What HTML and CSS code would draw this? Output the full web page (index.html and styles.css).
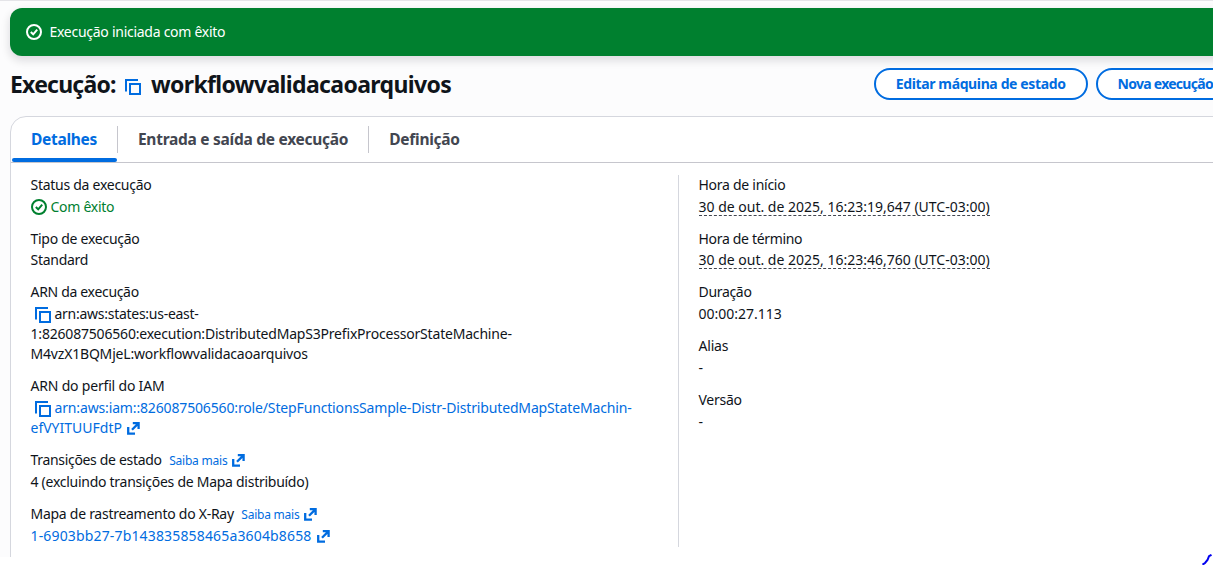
FILE: index.html
```
<!DOCTYPE html>
<html lang="pt-BR">
<head>
<meta charset="utf-8">
<title>Execução</title>
<link rel="stylesheet" href="styles.css">
</head>
<body>
<svg class="defs" aria-hidden="true">
  <symbol id="copy" viewBox="0 0 16 16"><path d="M1 12.5V1h12M5 5h10v10H5z"/></symbol>
  <symbol id="ok" viewBox="0 0 16 16"><circle cx="8" cy="8" r="7"/><path d="M4.8 8.1l2.4 2.2 4-4.6"/></symbol>
  <symbol id="ext" viewBox="0 0 13 13"><path d="M1.2 5v6.6H8M5.8 1.2h5.8V7M11.4 1.4L5 7.8"/></symbol>
</svg>
<div class="page">
  <div class="flash"><svg class="icon"><use href="#ok"/></svg><span>Execução iniciada com êxito</span></div>
  <header class="header">
    <h1 class="title"><span class="title-label">Execução:</span><svg class="icon title-copy"><use href="#copy"/></svg><span class="title-name">workflowvalidacaoarquivos</span></h1>
    <div class="actions"><button class="button">Editar máquina de estado</button><button class="button button-new">Nova execução</button></div>
  </header>
  <section class="card">
    <nav class="tabs">
      <a class="tab active">Detalhes</a>
      <a class="tab">Entrada e saída de execução</a>
      <a class="tab">Definição</a>
    </nav>
    <div class="columns">
      <dl class="column main-column">
        <div class="field"><dt>Status da execução</dt><dd class="status"><svg class="icon"><use href="#ok"/></svg><span>Com êxito</span></dd></div>
        <div class="field"><dt>Tipo de execução</dt><dd>Standard</dd></div>
        <div class="field"><dt class="snug">ARN da execução</dt>
          <dd><svg class="icon copy"><use href="#copy"/></svg>arn:aws:states:us-east-<br><span class="arn">1:826087506560:execution:DistributedMapS3PrefixProcessorStateMachine-<br>M4vzX1BQMjeL:workflowvalidacaoarquivos</span></dd></div>
        <div class="field"><dt class="arn">ARN do perfil do IAM</dt>
          <dd class="link"><svg class="icon copy"><use href="#copy"/></svg><span class="role">arn:aws:iam::826087506560:role/StepFunctionsSample-Distr-DistributedMapStateMachin-</span><br><span class="plain">efVYITUUFdtP</span><svg class="ext"><use href="#ext"/></svg></dd></div>
        <div class="field"><dt><span class="snug">Transições de estado</span><a class="link more">Saiba mais<svg class="ext"><use href="#ext"/></svg></a></dt><dd>4 (excluindo transições de Mapa distribuído)</dd></div>
        <div class="field"><dt>Mapa de rastreamento do X-Ray<a class="link more">Saiba mais<svg class="ext"><use href="#ext"/></svg></a></dt><dd class="link"><span class="trace">1-6903bb27-7b143835858465a3604b8658</span><svg class="ext"><use href="#ext"/></svg></dd></div>
      </dl>
      <dl class="column side-column">
        <div class="field"><dt>Hora de início</dt><dd class="plain"><span class="date">30 de out. de 2025, 16:23:19,647 (UTC-03:00)</span></dd></div>
        <div class="field"><dt class="snug">Hora de término</dt><dd class="plain"><span class="date">30 de out. de 2025, 16:23:46,760 (UTC-03:00)</span></dd></div>
        <div class="field"><dt class="snug">Duração</dt><dd class="plain">00:00:27.113</dd></div>
        <div class="field"><dt class="arn">Alias</dt><dd>-</dd></div>
        <div class="field"><dt>Versão</dt><dd>-</dd></div>
      </dl>
    </div>
  </section>
</div>
<svg class="pen" viewBox="0 0 10 11"><path d="M.5 10.7L3 9l2.5-3L7 2.2 9.5.8"/></svg>
</body>
</html>
```
FILE: styles.css
```
* { box-sizing: border-box; }
body {
  margin: 0;
  height: 565px;
  overflow: hidden;
  background: #fff;
  color: #0f141a;
  font: 14px/20px "Noto Sans", sans-serif;
  letter-spacing: -0.27px;
}
.defs { position: absolute; width: 0; height: 0; }
.page {
  height: 557px;
  padding: 7px 0 0 10px;
  overflow: hidden;
  background: #fcfcfd;
  border-top: 1px solid #e4e4e8;
}
svg { fill: none; stroke: currentColor; stroke-width: 2; flex: none; }
.icon { width: 16px; height: 16px; }
.flash {
  display: flex;
  align-items: center;
  gap: 8px;
  width: 1220px;
  height: 48px;
  padding: 0 16px 1px 15.5px;
  border-radius: 12px;
  background: #00802f;
  color: #fff;
  box-shadow: 0 4px 8px 1px rgba(0, 7, 22, 0.12);
}
.header {
  display: flex;
  justify-content: space-between;
  width: 1221.5px;
  height: 60px;
  padding-top: 12px;
}
.title {
  display: flex;
  margin: 0;
  font-size: 23px;
  font-weight: 700;
  line-height: 32px;
}
.title-label { width: 115px; letter-spacing: -0.78px; }
.title-copy { margin: 11px 10px 0 0; color: #006ce0; }
.title-name { letter-spacing: -0.63px; }
.actions { display: flex; gap: 8px; }
.button {
  height: 32px;
  padding: 0 20px 1px;
  border: 2px solid #006ce0;
  border-radius: 16px;
  background: #fff;
  color: #006ce0;
  font: 700 14px/20px "Noto Sans", sans-serif;
  letter-spacing: -0.38px;
  white-space: nowrap;
}
.button-new { width: 136px; padding-right: 0; letter-spacing: -0.72px; text-align: left; }
.card {
  width: 1240px;
  height: 460px;
  border: 1px solid #d5d7de;
  border-radius: 16px;
  background: #fff;
}
.tabs {
  display: flex;
  height: 46px;
  padding-left: 1px;
  border-bottom: 1px solid #c6c6cd;
}
.tab {
  position: relative;
  height: 45px;
  padding: 10px 20px 0 21px;
  color: #424650;
  font-size: 15.5px;
  font-weight: 700;
  line-height: 24px;
  letter-spacing: -0.27px;
}
.tab + .tab::before {
  content: "";
  position: absolute;
  left: 0;
  top: 9px;
  width: 1px;
  height: 27px;
  background: #c6c6cd;
}
.active { padding: 10px 20px 0 19px; letter-spacing: -0.3px; color: #006ce0; }
.active::after {
  content: "";
  position: absolute;
  left: 0;
  right: 0;
  bottom: 0;
  height: 4px;
  border-radius: 4px;
  background: #006ce0;
}
.columns { display: flex; padding-top: 12px; }
.column { margin: 0; display: flex; flex-direction: column; gap: 12px; }
.main-column { width: 667px; padding-left: 19.5px; margin-top: -0.4px; }
.side-column {
  height: 372px;
  padding-left: 19.5px;
  border-left: 1px solid #d5d7de;
}
.side-column .field:first-child { margin-top: -0.4px; }
.field { display: flex; flex-direction: column; gap: 2px; }
dt, dd { margin: 0; white-space: nowrap; }
dt { height: 19.9px; }
.status { display: flex; align-items: center; gap: 4px; color: #00802f; }
.link { color: #006ce0; }
.copy { margin: -4px 4px 0 4px; color: #006ce0; vertical-align: -4px; }
.ext { width: 13px; height: 13px; margin-left: 5px; stroke-width: 2.3; vertical-align: -2px; }
.more { margin-left: 7.5px; font-size: 12px; letter-spacing: -0.22px; }
.more .ext { margin-left: 4.5px; }
.snug { letter-spacing: -0.32px; }
.arn { letter-spacing: -0.19px; }
.role { letter-spacing: -0.148px; }
.plain { letter-spacing: 0; }
.trace { letter-spacing: 0.157px; }
.date {
  display: inline-block;
  height: 19px;
  border-bottom: 1px dashed #424650;
}
.pen { position: absolute; right: 1px; bottom: 0; width: 10px; height: 11px; color: #0000f0; stroke-width: 2; }
```
